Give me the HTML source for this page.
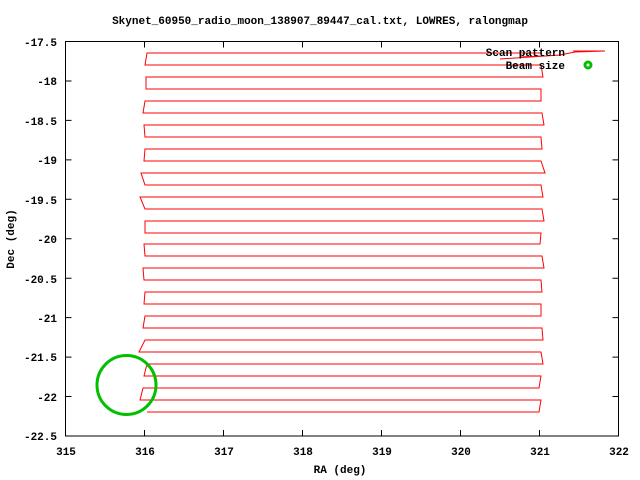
<!DOCTYPE html>
<html><head><style>
html,body{margin:0;padding:0;background:#fff;}
svg{display:block;}
text{font-family:"Liberation Mono",monospace;font-weight:bold;font-size:11px;fill:#000;}
</style></head><body>
<svg width="640" height="480" viewBox="0 0 640 480" xmlns="http://www.w3.org/2000/svg">
<rect width="640" height="480" fill="#fff"/>
<text x="320" y="24" text-anchor="middle">Skynet_60950_radio_moon_138907_89447_cal.txt, LOWRES, ralongmap</text>
<g stroke="#000" stroke-width="1" fill="none">
<rect x="65.5" y="41.5" width="553" height="394.5"/>
<path d="M65.5,41.5h6M65.5,81h6M65.5,120.4h6M65.5,159.9h6M65.5,199.3h6M65.5,238.8h6M65.5,278.2h6M65.5,317.6h6M65.5,357.1h6M65.5,396.5h6
M618.5,41.5h-6M618.5,81h-6M618.5,120.4h-6M618.5,159.9h-6M618.5,199.3h-6M618.5,238.8h-6M618.5,278.2h-6M618.5,317.6h-6M618.5,357.1h-6M618.5,396.5h-6
M144.5,436v-6M223.5,436v-6M302.5,436v-6M381.5,436v-6M460.5,436v-6M539.5,436v-6
M144.5,41.5v6M223.5,41.5v6M302.5,41.5v6M381.5,41.5v6M460.5,41.5v6M539.5,41.5v6"/>
</g>
<g text-anchor="end">
<text x="57" y="46">-17.5</text><text x="57" y="85">-18</text><text x="57" y="125">-18.5</text>
<text x="57" y="164">-19</text><text x="57" y="204">-19.5</text><text x="57" y="243">-20</text>
<text x="57" y="283">-20.5</text><text x="57" y="322">-21</text><text x="57" y="361">-21.5</text>
<text x="57" y="401">-22</text><text x="57" y="440">-22.5</text>
</g>
<g text-anchor="middle">
<text x="66" y="455">315</text><text x="145" y="455">316</text><text x="224" y="455">317</text>
<text x="303" y="455">318</text><text x="382" y="455">319</text><text x="461" y="455">320</text>
<text x="540" y="455">321</text><text x="619" y="455">322</text>
<text x="340" y="473">RA (deg)</text>
<text transform="translate(14,239) rotate(-90)">Dec (deg)</text>
</g>
<path fill="none" stroke="#f00" stroke-width="1" d="M542,53 L147,53 L145,65 L541,65 L543,77 L146,77 L146,89 L541,89 L541,101 L145,101 L143,113 L542,113 L544,125 L144,125 L145,137 L541,137 L542,149 L145,149 L144,161 L541,161 L545,173 L141,173 L145,185 L541,185 L543,197 L140,197 L145,209 L542,209 L544,221 L145,221 L145,233 L541,233 L540,244 L144,244 L145,256 L542,256 L544,268 L143,268 L144,280 L541,280 L542,292 L145,292 L144,304 L541,304 L541,316 L145,316 L143,328 L542,328 L543,340 L145,340 L139,352 L541,352 L543,364 L147,364 L144,376 L541,376 L539,388 L143,388 L140,400 L541,400 L539,412 L147,412"/>
<path fill="none" stroke="#f00" stroke-width="1" d="M500,59 L560,55 L575,52 L605,51 M520,57 L540,56"/>
<text x="565" y="56" text-anchor="end">Scan pattern</text>
<text x="565" y="69" text-anchor="end">Beam size</text>
<line x1="573" y1="51" x2="605" y2="51" stroke="#f00"/>
<circle cx="588" cy="65" r="3" fill="none" stroke="#00c000" stroke-width="3"/>
<circle cx="126.5" cy="385" r="29.5" fill="none" stroke="#00c000" stroke-width="3"/>
</svg>
</body></html>
